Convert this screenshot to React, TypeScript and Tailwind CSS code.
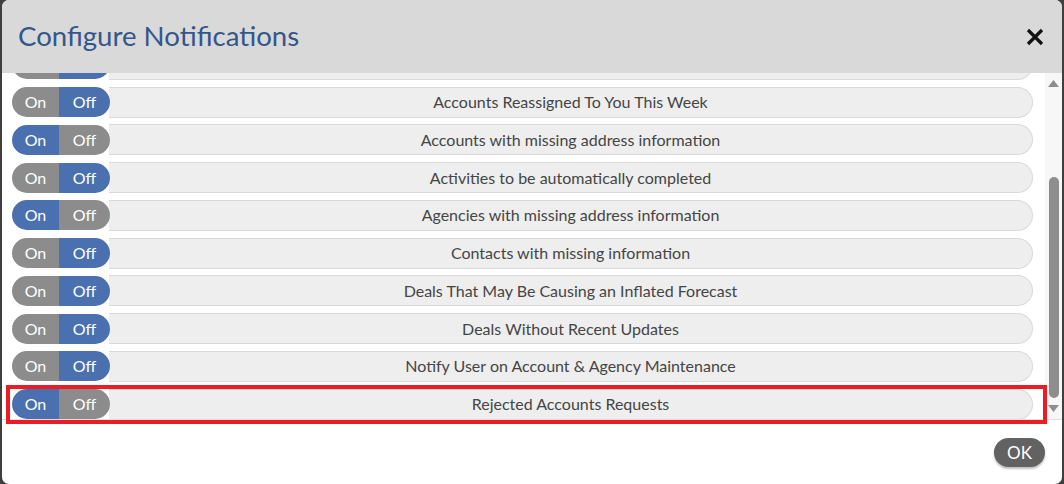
import React from "react";

const rows: { label: string; on: boolean }[] = [
  { label: "Account Activity Summary", on: false },
  { label: "Accounts Reassigned To You This Week", on: false },
  { label: "Accounts with missing address information", on: true },
  { label: "Activities to be automatically completed", on: false },
  { label: "Agencies with missing address information", on: true },
  { label: "Contacts with missing information", on: false },
  { label: "Deals That May Be Causing an Inflated Forecast", on: false },
  { label: "Deals Without Recent Updates", on: false },
  { label: "Notify User on Account & Agency Maintenance", on: false },
  { label: "Rejected Accounts Requests", on: true },
];

function Row({ label, on, hideLabel }: { label: string; on: boolean; hideLabel?: boolean }) {
  return (
    <div className="flex items-center h-[31px] shrink-0">
      <div className="flex w-[98px] h-[30px] rounded-full overflow-hidden relative z-10 text-white text-[16px] shrink-0">
        <div
          className={
            "w-[47px] flex items-center justify-center " +
            (on ? "bg-[#4a70b0]" : "bg-[#8c8c8c]")
          }
        >
          On
        </div>
        <div
          className={
            "flex-1 flex items-center justify-center " +
            (on ? "bg-[#8c8c8c]" : "bg-[#4a70b0]")
          }
        >
          Off
        </div>
      </div>
      <div className="flex-1 ml-[-1px] h-[31px] bg-[#eeeeee] border border-l-0 border-[#d9d9d9] rounded-r-full flex items-center justify-center text-[16px] text-[#454545]">
        {hideLabel ? "" : label}
      </div>
    </div>
  );
}

export default function App() {
  return (
    <div
      className="w-[1064px] h-[484px] bg-[#3f3f3f] flex px-[2px] relative overflow-hidden"
      style={{ fontFamily: "Lato, 'Noto Sans', sans-serif" }}
    >
      <div className="flex-1 bg-white rounded-[7px] overflow-hidden flex flex-col">
        <div className="h-[73px] shrink-0 bg-[#d9d9d9] flex items-center justify-between pl-[16px] pr-[18px]">
          <div className="text-[27.6px] text-[#34568b] leading-none pb-[1px]">Configure Notifications</div>
          <svg width="18" height="18" viewBox="0 0 18 18" className="mt-[1px]">
            <path d="M2 2 L16 16 M16 2 L2 16" stroke="#111" strokeWidth="3.2" strokeLinecap="butt" />
          </svg>
        </div>
        <div className="h-[347px] shrink-0 flex border-b border-[#dedede]">
          <div className="flex-1 overflow-hidden pl-[10px] pr-[12px]">
            <div className="flex flex-col gap-[6.75px] mt-[-24.25px]">
              {rows.map((r, i) => (
                <Row key={i} label={r.label} on={r.on} hideLabel={i === 0} />
              ))}
            </div>
          </div>
          <div className="w-[17px] bg-[#f7f7f7] flex flex-col items-center pt-[7px]">
            <svg width="11" height="7" viewBox="0 0 11 7">
              <path d="M5.5 0 L11 7 L0 7 Z" fill="#8e8e8e" />
            </svg>
            <div className="mt-[90px] h-[221px] w-[10px] rounded-full bg-[#8e8e8e]" />
            <svg width="11" height="7" viewBox="0 0 11 7" className="mt-[7px]">
              <path d="M0 0 L11 0 L5.5 7 Z" fill="#8e8e8e" />
            </svg>
          </div>
        </div>
        <div className="flex justify-end pt-[18px] pr-[17px]">
          <div className="w-[51px] h-[29px] rounded-full bg-[#626262] text-white text-[17px] flex items-center justify-center shadow-[0_2px_2px_rgba(0,0,0,0.25)]">
            OK
          </div>
        </div>
      </div>
      <div className="absolute left-[6px] top-[385px] w-[1041px] h-[39px] border-[4px] border-[#ed1c24] pointer-events-none" />
    </div>
  );
}
